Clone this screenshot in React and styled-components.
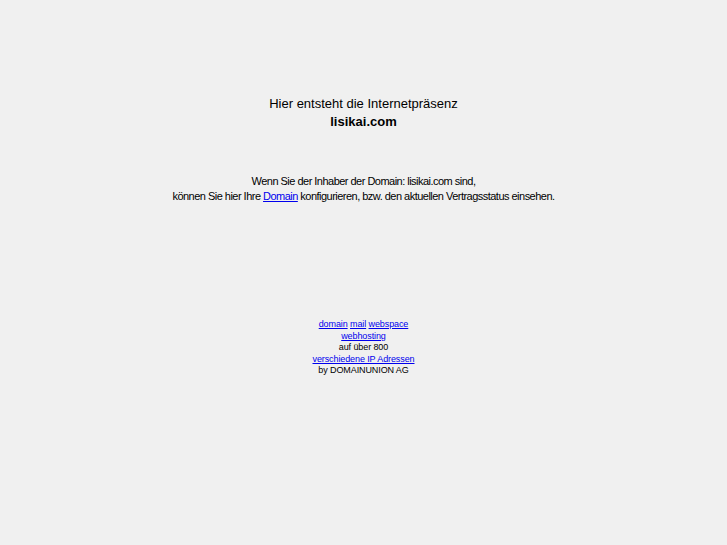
import React from 'react';
import styled, { createGlobalStyle } from 'styled-components';

const GlobalStyle = createGlobalStyle`
  html, body { margin:0; padding:0; background:#f0f0f0; }
  body { font-family:"Liberation Sans", Arial, sans-serif; color:#000; }
`;

const Page = styled.div`
  display:flex;
  flex-direction:column;
  align-items:center;
  text-align:center;
  padding-top:95px;
`;

const Title = styled.div`
  font-size:13px;
  line-height:18px;
`;

const Domain = styled.div`
  font-weight:bold;
  font-size:13px;
  line-height:18px;
`;

const Owner = styled.p`
  margin:43px 0 0;
  font-size:11px;
  line-height:15px;
  letter-spacing:-0.52px;
`;

const Footer = styled.div`
  margin-top:115px;
  font-size:9px;
  line-height:11.5px;
  letter-spacing:-0.1px;
`;

const Link = styled.a`
  color:#0000ee;
  text-decoration:underline;
`;

export default function App() {
  return (
    <>
      <GlobalStyle />
      <Page>
        <Title>Hier entsteht die Internetpräsenz</Title>
        <Domain>lisikai.com</Domain>
        <Owner>
          Wenn Sie der Inhaber der Domain: lisikai.com sind,<br />
          können Sie hier Ihre <Link href="#">Domain</Link> konfigurieren, bzw. den aktuellen Vertragsstatus einsehen.
        </Owner>
        <Footer>
          <Link href="#">domain</Link> <Link href="#">mail</Link> <Link href="#">webspace</Link><br />
          <Link href="#">webhosting</Link><br />
          auf über 800<br />
          <Link href="#">verschiedene IP Adressen</Link><br />
          by DOMAINUNION AG
        </Footer>
      </Page>
    </>
  );
}
